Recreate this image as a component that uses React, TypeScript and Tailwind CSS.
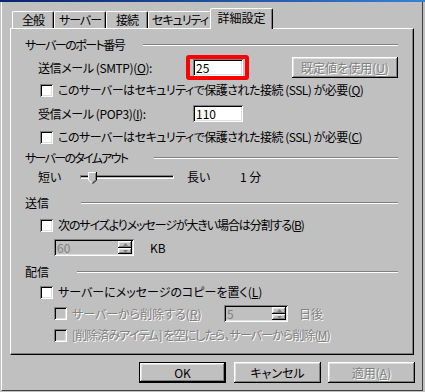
import React from 'react';

const raised = 'shadow-[inset_-1px_-1px_#000,inset_1px_1px_#fff,inset_-2px_-2px_#808080,inset_2px_2px_#dfdfdf]';
const sunken = 'shadow-[inset_1px_1px_#808080,inset_-1px_-1px_#fff,inset_2px_2px_#000,inset_-2px_-2px_#dfdfdf]';
const grayText = 'text-[#808080] [text-shadow:1px_1px_0_#fff]';

const Checkbox = ({ disabled = false }: { disabled?: boolean }) => (
  <span className={`w-[13px] h-[13px] shrink-0 ${sunken} ${disabled ? 'bg-[#c0c0c0]' : 'bg-white'}`} />
);

const Group = ({ label, w, mt, tr = '' }: { label: string; w: string; mt: string; tr?: string }) => (
  <div className={`flex items-center h-[16px] ml-[14px] mr-[15px] ${mt}`}>
    <span className={`${w} ${tr} shrink-0 whitespace-nowrap`}>{label}</span>
    <div className="flex-1 h-[2px] border-t border-t-[#808080] border-b border-b-white" />
  </div>
);

const CheckRow = ({ children, mt, ml = 'ml-[29px]', tr = '', disabled = false }: { children: React.ReactNode; mt: string; ml?: string; tr?: string; disabled?: boolean }) => (
  <div className={`flex items-center h-[16px] gap-[5px] ${ml} ${mt}`}>
    <Checkbox disabled={disabled} />
    <span className={`whitespace-nowrap ${tr} ${disabled ? grayText : ''}`}>{children}</span>
  </div>
);

const Arrow = ({ up }: { up?: boolean }) => (
  <svg width="5" height="3" viewBox="0 0 5 3">
    <path d={up ? 'M2.5 0 L5 3 L0 3 Z' : 'M0 0 L5 0 L2.5 3 Z'} fill="#808080" />
  </svg>
);

const Spinner = ({ value, w }: { value: string; w: string }) => (
  <div className={`flex h-[17px] ${w} bg-[#c0c0c0] ${sunken} p-[2px]`}>
    <span className="flex-1 text-[#808080] leading-[13px] pl-[1px]">{value}</span>
    <div className="flex flex-col w-[14px]">
      <div className={`h-[7px] flex items-center justify-center ${raised}`}><Arrow up /></div>
      <div className={`h-[6px] flex items-center justify-center ${raised}`}><Arrow /></div>
    </div>
  </div>
);

const Btn = ({ children, w, disabled = false, def = false }: { children: React.ReactNode; w: string; disabled?: boolean; def?: boolean }) => (
  <div className={`${w} h-[21px] ${def ? 'border border-black' : ''}`}>
    <div className={`w-full h-full flex items-center justify-center whitespace-nowrap ${raised} ${disabled ? grayText : ''}`}>{children}</div>
  </div>
);

const Tab = ({ label, w }: { label: string; w: string }) => (
  <div className={`h-[17px] ${w} flex items-center justify-center whitespace-nowrap tracking-[-1px] border-t border-l border-white border-r border-r-black rounded-t-[2px] shadow-[inset_-1px_0_#808080]`}>
    {label}
  </div>
);

export default function App() {
  return (
    <div className="w-[425px] h-[392px] bg-[#c0c0c0] flex flex-col overflow-hidden text-black text-[12px] leading-[16px] font-['Noto_Sans_CJK_JP','Noto_Sans',sans-serif] [font-feature-settings:'palt']">
      <div className="h-[2px] shrink-0 bg-gradient-to-r from-[#0a246a] to-[#3a80d2]" />
      <div className="flex-1 flex flex-col ml-[1px] border-l border-l-white mr-[2px] border-r border-r-[#404040] mb-[1px] border-b border-b-[#404040]">
        {/* tabs */}
        <div className="flex items-end h-[20px] mt-[6px] pl-[10px]">
          <Tab label="全般" w="w-[42px]" />
          <Tab label="サーバー" w="w-[52px]" />
          <Tab label="接続" w="w-[42px]" />
          <Tab label="セキュリティ" w="w-[64px]" />
          <div className="relative z-10 w-[63px] h-[21px] -ml-[2px] -mb-[1px] bg-[#c0c0c0] flex items-center justify-center pb-[2px] whitespace-nowrap border-t border-l border-white border-r border-r-black rounded-t-[2px] shadow-[inset_-1px_0_#808080]">
            詳細設定
          </div>
        </div>

        {/* panel */}
        <div className="ml-[8px] w-[404px] h-[327px] flex flex-col border-t border-l border-white border-r border-b border-r-black border-b-black shadow-[inset_-1px_-1px_#808080]">
          <Group label="サーバーのポート番号" w="w-[118px]" mt="mt-[8px]" tr="tracking-[-1.5px]" />

          <div className="flex items-center h-[25px] ml-[27px] mt-[2px]">
            <span className="w-[148px] shrink-0 whitespace-nowrap tracking-[-0.4px]">送信メール (SMTP)(<u>O</u>):</span>
            <div className="h-[25px] border-4 border-[#ff0000] rounded-[3px] pl-[3px] pr-[2px] flex items-center">
              <div className={`w-[50px] h-[17px] bg-white ${sunken} px-[3px] leading-[17px]`}>25</div>
            </div>
            <div className="ml-[43px]">
              <Btn w="w-[106px]" disabled>既定値を使用(<u>U</u>)</Btn>
            </div>
          </div>

          <CheckRow mt="mt-[2px]" tr="tracking-[-0.5px]">このサーバーはセキュリティで保護された接続 (SSL) が必要(<u>Q</u>)</CheckRow>

          <div className="flex items-center h-[17px] ml-[27px] mt-[7px]">
            <span className="w-[155px] shrink-0 whitespace-nowrap tracking-[-0.4px]">受信メール (POP3)(<u>I</u>):</span>
            <div className={`w-[50px] h-[17px] bg-white ${sunken} px-[3px] leading-[17px]`}>110</div>
          </div>

          <CheckRow mt="mt-[7px]" tr="tracking-[-0.5px]">このサーバーはセキュリティで保護された接続 (SSL) が必要(<u>C</u>)</CheckRow>

          <Group label="サーバーのタイムアウト" w="w-[129px]" mt="mt-[5px]" tr="tracking-[-1.7px]" />

          <div className="flex items-center h-[16px] ml-[27px] mt-[3px]">
            <span className="w-[42px] shrink-0">短い</span>
            <div className="relative w-[94px] h-[16px] flex items-center">
              <div className="w-full h-[4px] border-t border-l border-[#808080] border-b border-r border-b-white border-r-white shadow-[inset_0_1px_#000]" />
              <svg className="absolute left-[8px] top-[3px]" width="9" height="12" viewBox="0 0 9 12">
                <path d="M0.5 0.5 H8.5 V8 L4.5 11.5 L0.5 8 Z" fill="#c0c0c0" />
                <path d="M0.5 8 V0.5 H7.5" stroke="#fff" fill="none" />
                <path d="M8.5 0 V8.2 L4.5 11.7" stroke="#000" fill="none" />
                <path d="M7.5 1.5 V7.8 L4.5 10.4" stroke="#808080" fill="none" />
                <path d="M0.5 8 L3.5 10.7" stroke="#fff" fill="none" />
              </svg>
            </div>
            <span className="ml-[13px] w-[53px] shrink-0">長い</span>
            <span>1 分</span>
          </div>

          <Group label="送信" w="w-[56px]" mt="mt-[10px]" />

          <CheckRow mt="mt-[6px]" tr="tracking-[-1.1px]">次のサイズよりメッセージが大きい場合は分割する(<u>B</u>)</CheckRow>

          <div className="flex items-center h-[17px] ml-[43px] mt-[6px]">
            <Spinner value="60" w="w-[80px]" />
            <span className="ml-[16px]">KB</span>
          </div>

          <Group label="配信" w="w-[52px]" mt="mt-[8px]" />

          <CheckRow mt="mt-[4px]">サーバーにメッセージのコピーを置く(<u>L</u>)</CheckRow>

          <div className="flex items-center h-[17px] ml-[43px] mt-[5px]">
            <Checkbox disabled />
            <span className={`ml-[5px] w-[152px] shrink-0 whitespace-nowrap ${grayText}`}>サーバーから削除する(<u>R</u>)</span>
            <Spinner value="5" w="w-[64px]" />
            <span className={`ml-[11px] ${grayText}`}>日後</span>
          </div>

          <CheckRow mt="mt-[5px]" ml="ml-[43px]" tr="tracking-[-0.9px]" disabled>
            [削除済みアイテム] を空にしたら、サーバーから削除(<u>M</u>)
          </CheckRow>
        </div>

        {/* buttons */}
        <div className="flex mt-[7px] ml-[137px]">
          <Btn w="w-[87px]" def>OK</Btn>
          <div className="ml-[8px]"><Btn w="w-[87px]">キャンセル</Btn></div>
          <div className="ml-[7px]"><Btn w="w-[87px]" disabled>適用(<u>A</u>)</Btn></div>
        </div>
      </div>
    </div>
  );
}
